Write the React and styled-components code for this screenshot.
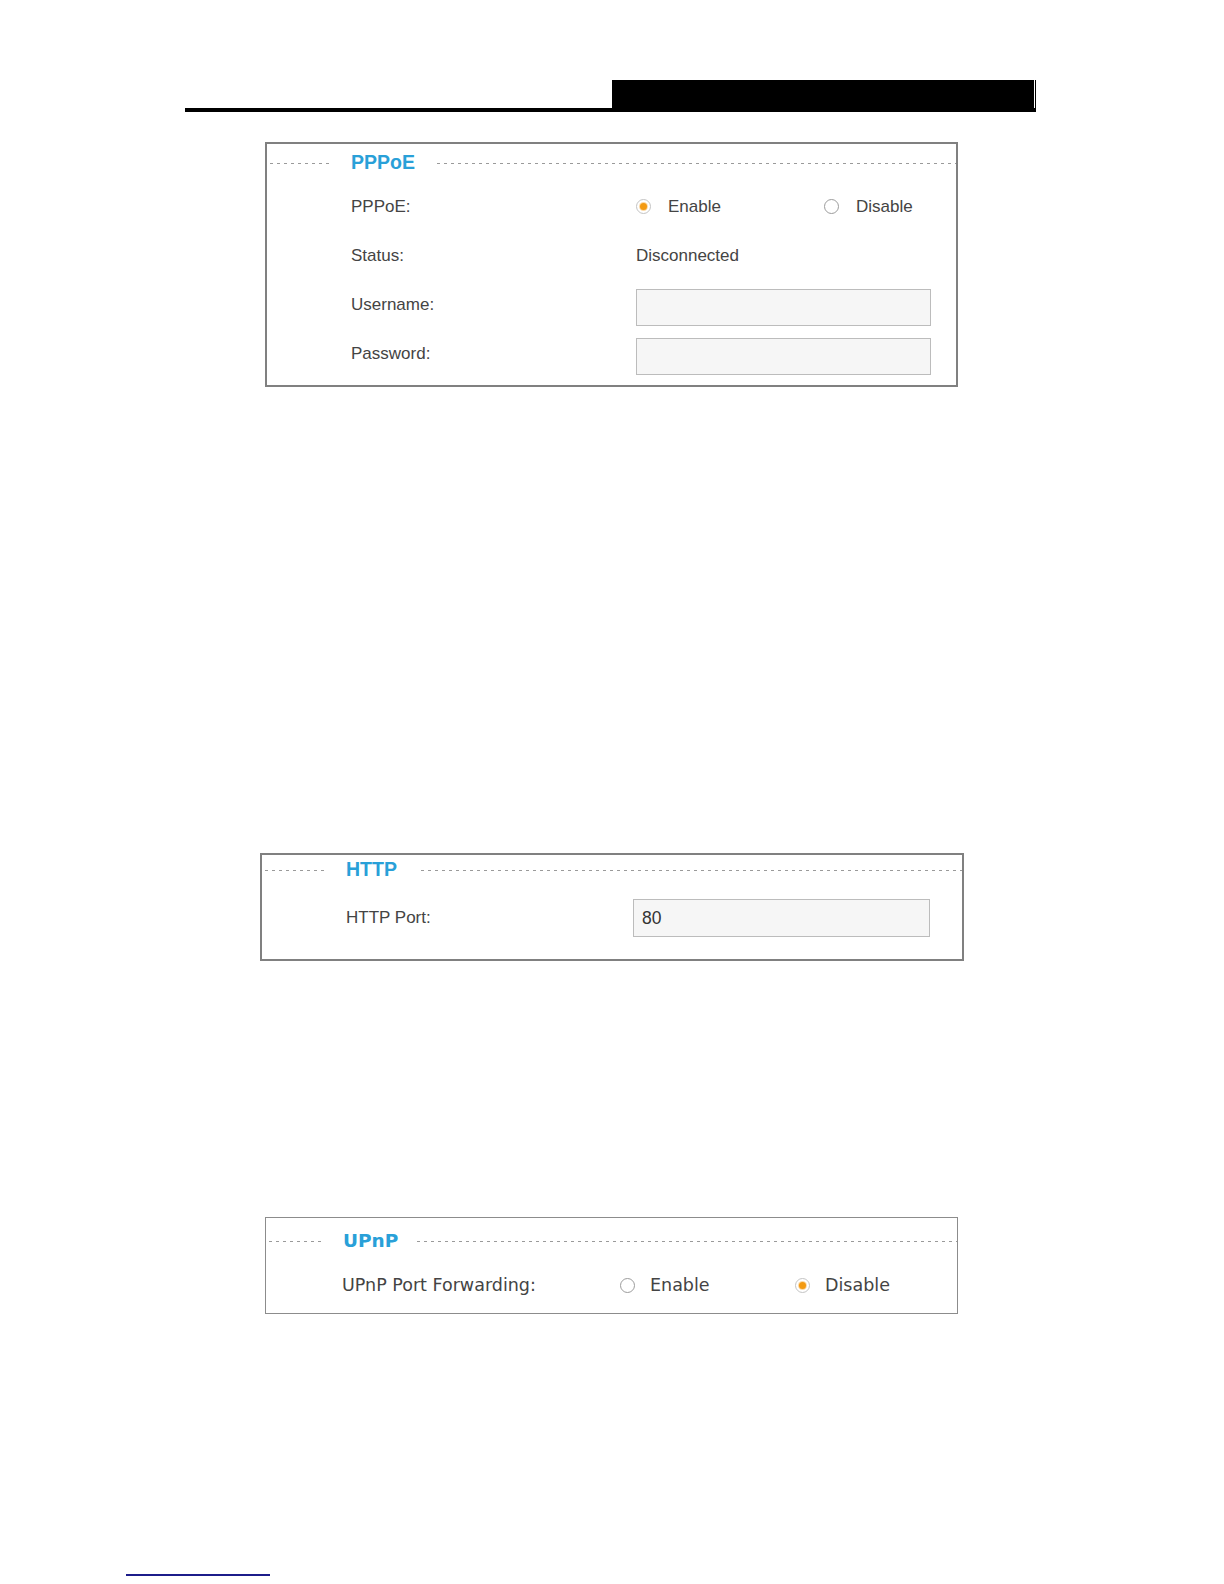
import styled, { createGlobalStyle } from 'styled-components';

const GlobalStyle = createGlobalStyle`
  html, body {
    margin: 0;
    padding: 0;
    background: #ffffff;
  }
  body {
    font-family: "Liberation Sans", Arial, sans-serif;
  }
`;

const Page = styled.div`
  width: 1224px;
  height: 1584px;
  padding-top: 80px;
  box-sizing: border-box;
  overflow: hidden;
`;

const HeaderBar = styled.div`
  margin-left: 185px;
  width: 851px;
  display: flex;
  justify-content: flex-end;
  border-bottom: 4px solid #000;
`;

const BlackTab = styled.div`
  width: 422px;
  height: 28px;
  background: #000;
`;

const TabEdge = styled.div`
  width: 1px;
  margin-left: 1px;
  background: #000;
`;

const Panel = styled.section`
  margin: ${(p) => p.$top}px 0 0 ${(p) => p.$left}px;
  width: ${(p) => p.$width}px;
  height: ${(p) => p.$height}px;
  box-sizing: border-box;
  border: ${(p) => p.$border}px solid ${(p) => p.$borderColor || '#808080'};
  padding-top: ${(p) => p.$padTop || 0}px;
  font-family: ${(p) => p.$font};
  font-size: ${(p) => p.$size}px;
  color: #444;
`;

const Legend = styled.div`
  display: flex;
  align-items: center;
  height: ${(p) => p.$height}px;
`;

const Dashes = styled.div`
  height: 1px;
  background-image: repeating-linear-gradient(
    to right,
    #9a9a9a 0,
    #9a9a9a 3px,
    transparent 3px,
    transparent 7px
  );
  ${(p) => (p.$width ? `width: ${p.$width}px; margin-left: 3px;` : 'flex: 1;')}
`;

const Title = styled.span`
  color: #29a0d8;
  font-weight: bold;
  font-size: ${(p) => p.$size}px;
  line-height: 1;
  margin: 0 ${(p) => p.$gapR}px 0 ${(p) => p.$gapL}px;
`;

const Row = styled.div`
  display: flex;
  align-items: center;
  height: ${(p) => p.$height}px;
  margin-top: ${(p) => p.$mt || 0}px;
  padding-left: ${(p) => p.$indent}px;
`;

const Label = styled.div`
  width: ${(p) => p.$width}px;
  flex-shrink: 0;
`;

const Value = styled.div`
  display: flex;
  align-items: center;
`;

const TextInput = styled.div`
  width: ${(p) => p.$width}px;
  height: ${(p) => p.$height}px;
  margin-top: ${(p) => p.$shift || 0}px;
  box-sizing: border-box;
  border: 1px solid #bcbcbc;
  background: #f6f6f6;
  display: flex;
  align-items: center;
  padding-left: 8px;
  color: #333;
  font-size: 17.5px;
`;

const Option = styled.label`
  display: flex;
  align-items: center;
  width: ${(p) => p.$width}px;
`;

const Radio = styled.span`
  width: 15px;
  height: 15px;
  box-sizing: border-box;
  border-radius: 50%;
  border: 1px solid ${(p) => (p.$checked ? '#c4c4c4' : '#9c9c9c')};
  background: #fff;
  display: flex;
  align-items: center;
  justify-content: center;
  margin-right: ${(p) => p.$gap}px;
  flex-shrink: 0;

  &::after {
    content: '';
    display: ${(p) => (p.$checked ? 'block' : 'none')};
    width: 7px;
    height: 7px;
    border-radius: 50%;
    background: #f39a12;
    box-shadow: 0 0 0 1px #fbd9a6;
  }
`;

const FooterLine = styled.div`
  margin: 260px 0 0 126px;
  width: 144px;
  height: 2px;
  background: #1c1c8a;
`;

const RadioGroup = ({ options, selected, width, gap }) => (
  <Value>
    {options.map((o) => (
      <Option key={o} $width={width}>
        <Radio $checked={o === selected} $gap={gap} />
        {o}
      </Option>
    ))}
  </Value>
);

export default function App() {
  return (
    <Page>
      <GlobalStyle />
      <HeaderBar>
        <BlackTab />
        <TabEdge />
      </HeaderBar>

      <Panel
        $top={30}
        $left={265}
        $width={693}
        $height={245}
        $border={2}
        $font={'"Liberation Sans", Arial, sans-serif'}
        $size={17}
      >
        <Legend $height={38}>
          <Dashes $width={62} />
          <Title $size={19.5} $gapL={19} $gapR={22}>PPPoE</Title>
          <Dashes />
        </Legend>
        <Row $height={49} $indent={84}>
          <Label $width={285}>PPPoE:</Label>
          <RadioGroup options={['Enable', 'Disable']} selected="Enable" width={188} gap={17} />
        </Row>
        <Row $height={49} $indent={84}>
          <Label $width={285}>Status:</Label>
          <Value>Disconnected</Value>
        </Row>
        <Row $height={49} $indent={84}>
          <Label $width={285}>Username:</Label>
          <TextInput $width={295} $height={37} $shift={6} />
        </Row>
        <Row $height={49} $indent={84}>
          <Label $width={285}>Password:</Label>
          <TextInput $width={295} $height={37} $shift={6} />
        </Row>
      </Panel>

      <Panel
        $top={466}
        $left={260}
        $width={704}
        $height={108}
        $border={2}
        $font={'"Liberation Sans", Arial, sans-serif'}
        $size={17}
      >
        <Legend $height={30}>
          <Dashes $width={62} />
          <Title $size={19.5} $gapL={19} $gapR={24}>HTTP</Title>
          <Dashes />
        </Legend>
        <Row $height={38} $mt={14} $indent={84}>
          <Label $width={287}>HTTP Port:</Label>
          <TextInput $width={297} $height={38}>80</TextInput>
        </Row>
      </Panel>

      <Panel
        $top={256}
        $left={265}
        $width={693}
        $height={97}
        $border={1}
        $borderColor="#8c8c8c"
        $padTop={8}
        $font={'"DejaVu Sans", Verdana, sans-serif'}
        $size={17.5}
      >
        <Legend $height={30}>
          <Dashes $width={52} />
          <Title $size={18.5} $gapL={22} $gapR={19}>UPnP</Title>
          <Dashes />
        </Legend>
        <Row $height={30} $mt={14} $indent={76}>
          <Label $width={278}>UPnP Port Forwarding:</Label>
          <RadioGroup options={['Enable', 'Disable']} selected="Disable" width={175} gap={15} />
        </Row>
      </Panel>

      <FooterLine />
    </Page>
  );
}
